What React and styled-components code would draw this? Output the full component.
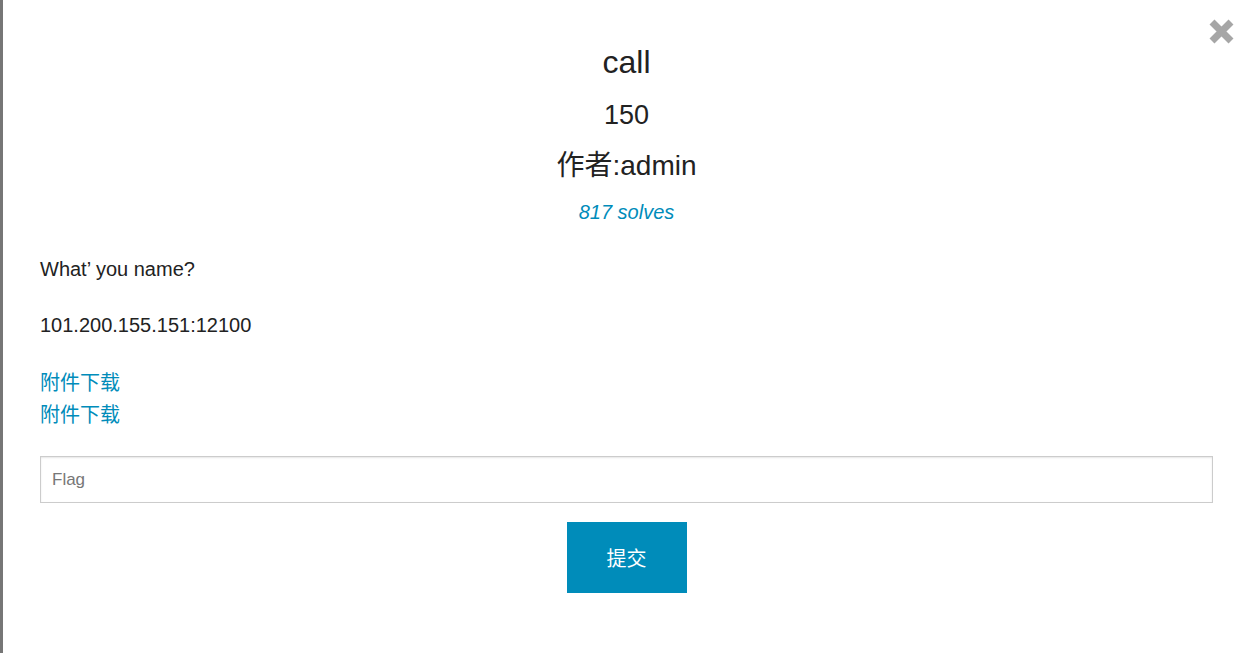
import React from "react";
import styled, { createGlobalStyle } from "styled-components";

const Global = createGlobalStyle`
  html, body { margin: 0; padding: 0; background: #fff; }
  body { font-family: "Liberation Sans", Arial, "Noto Sans CJK SC", sans-serif; color: #222; }
  * { box-sizing: border-box; }
`;

const Modal = styled.div`
  position: relative;
  min-height: 653px;
  border-left: 3px solid #767676;
  padding: 0 35px 0 37px;
  background: #fff;
`;

const Close = styled.button`
  position: absolute;
  top: 18px;
  right: 13px;
  width: 27px;
  height: 27px;
  padding: 0;
  border: 0;
  background: none;
  cursor: pointer;
  display: flex;
`;

const Header = styled.div`
  display: flex;
  flex-direction: column;
  align-items: center;
  text-align: center;
`;

const Title = styled.h2`
  margin: 42px 0 0;
  font-size: 32px;
  line-height: 40px;
  font-weight: 400;
  color: #222;
`;

const Points = styled.h3`
  margin: 16px 0 0;
  font-size: 27px;
  line-height: 34px;
  font-weight: 400;
  color: #222;
`;

const Author = styled.h3`
  margin: 16px 0 0;
  font-size: 28px;
  line-height: 36px;
  font-weight: 400;
  color: #222;
`;

const Solves = styled.a`
  margin-top: 14px;
  font-size: 20px;
  line-height: 28px;
  font-style: italic;
  color: #008cba;
  text-decoration: none;
`;

const Body = styled.div`
  margin-top: 29px;
`;

const Para = styled.p`
  margin: 0 0 28px;
  font-size: 20px;
  line-height: 28px;
  color: #222;
`;

const Files = styled.div`
  margin-top: 1px;
  display: flex;
  flex-direction: column;
  align-items: flex-start;
`;

const FileLink = styled.a`
  font-size: 20px;
  line-height: 32px;
  color: #008cba;
  text-decoration: none;
`;

const Form = styled.form`
  margin-top: 25px;
  display: flex;
  flex-direction: column;
  align-items: center;
  gap: 19px;
`;

const FlagInput = styled.input`
  width: 100%;
  height: 47px;
  border: 1px solid #ccc;
  box-shadow: inset 0 1px 2px rgba(0, 0, 0, 0.1);
  padding: 0 11px;
  font-family: "Liberation Sans", Arial, sans-serif;
  font-size: 17px;
  color: #222;
  outline: none;
  &::placeholder { color: #777; }
`;

const Submit = styled.button`
  width: 120px;
  height: 71px;
  border: 0;
  background: #008cba;
  color: #fff;
  font-family: "Liberation Sans", Arial, "Noto Sans CJK SC", sans-serif;
  font-size: 20px;
  cursor: pointer;
`;

export default function App() {
  return (
    <>
      <Global />
      <Modal>
        <Close aria-label="close">
          <svg width="27" height="27" viewBox="0 0 27 27">
            <path d="M4 4 L23 23 M23 4 L4 23" stroke="#a6a6a6" strokeWidth="7" strokeLinecap="butt" />
          </svg>
        </Close>
        <Header>
          <Title>call</Title>
          <Points>150</Points>
          <Author>作者:admin</Author>
          <Solves href="#">817 solves</Solves>
        </Header>
        <Body>
          <Para>What’ you name?</Para>
          <Para>101.200.155.151:12100</Para>
          <Files>
            <FileLink href="#">附件下载</FileLink>
            <FileLink href="#">附件下载</FileLink>
          </Files>
        </Body>
        <Form onSubmit={(e) => e.preventDefault()}>
          <FlagInput placeholder="Flag" />
          <Submit type="submit">提交</Submit>
        </Form>
      </Modal>
    </>
  );
}
